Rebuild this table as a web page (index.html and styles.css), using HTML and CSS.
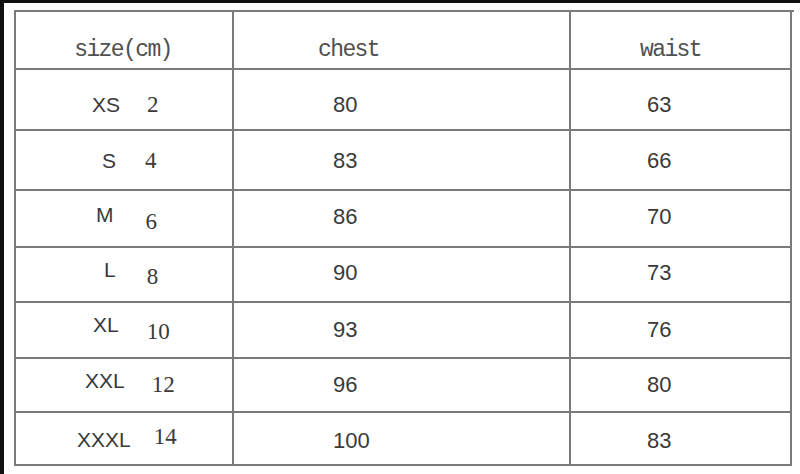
FILE: index.html
```html
<!DOCTYPE html>
<html lang="en">
<head>
<meta charset="utf-8">
<title>Size chart</title>
<link rel="stylesheet" href="styles.css">
</head>
<body>
<div class="frame">
  <div class="chart">
    <div class="cell head h-size">size(cm)</div>
    <div class="cell head h-chest">chest</div>
    <div class="cell head h-waist">waist</div>

    <div class="cell sz r1"><span class="lbl">XS</span><span class="num">2</span></div>
    <div class="cell val c r1">80</div>
    <div class="cell val w r1">63</div>

    <div class="cell sz r2"><span class="lbl">S</span><span class="num">4</span></div>
    <div class="cell val c r2">83</div>
    <div class="cell val w r2">66</div>

    <div class="cell sz r3"><span class="lbl">M</span><span class="num">6</span></div>
    <div class="cell val c r3">86</div>
    <div class="cell val w r3">70</div>

    <div class="cell sz r4"><span class="lbl">L</span><span class="num">8</span></div>
    <div class="cell val c r4">90</div>
    <div class="cell val w r4">73</div>

    <div class="cell sz r5"><span class="lbl">XL</span><span class="num">10</span></div>
    <div class="cell val c r5">93</div>
    <div class="cell val w r5">76</div>

    <div class="cell sz r6"><span class="lbl">XXL</span><span class="num">12</span></div>
    <div class="cell val c r6">96</div>
    <div class="cell val w r6">80</div>

    <div class="cell sz r7"><span class="lbl">XXXL</span><span class="num">14</span></div>
    <div class="cell val c r7">100</div>
    <div class="cell val w r7">83</div>
  </div>
</div>
</body>
</html>
```
FILE: styles.css
```css
html, body {
  margin: 0;
  padding: 0;
  background: #ffffff;
}

.frame {
  box-sizing: border-box;
  width: 800px;
  height: 474px;
  border-top: 3px solid #111111;
  border-left: 4px solid #111111;
  padding: 7px 0 0 10px;
  background: #ffffff;
}

.chart {
  display: grid;
  grid-template-columns: 218px 337px 221px;
  grid-template-rows: 58px 61px 60px 57px 55px 56px 54px 53px;
  width: 778px;
  border-top: 2px solid #7a7a7a;
  border-left: 2px solid #7a7a7a;
}

.cell {
  box-sizing: border-box;
  border-right: 2px solid #7a7a7a;
  border-bottom: 2px solid #7a7a7a;
  display: flex;
  align-items: center;
  color: #333333;
}

.head {
  font-family: "Liberation Mono", monospace;
  font-size: 23px;
  letter-spacing: -1.6px;
  color: #505050;
  padding-top: 19px;
}

.h-size { justify-content: center; padding-right: 2px; }
.h-chest { padding-left: 84px; }
.h-waist { padding-left: 69px; }

.sz .lbl {
  font-family: "Liberation Sans", Arial, sans-serif;
  font-size: 21px;
  color: #3a3a3a;
}

.sz .num {
  font-family: "Liberation Serif", "Times New Roman", serif;
  font-size: 23px;
  color: #3a3a3a;
}

.val {
  font-family: "Liberation Sans", Arial, sans-serif;
  font-size: 22px;
  color: #3a3a3a;
}

.val.c { padding-left: 99px; }
.val.w { padding-left: 76px; }

/* row vertical tuning */
.r1 { padding-top: 11px; }
.r2 { padding-top: 2px; }
.r3 { padding-bottom: 3px; }
.r4 { padding-bottom: 3px; }
.r7 { padding-top: 5px; }

/* size column: label/number placement per row */
.sz.r1 { padding-left: 76px; }
.sz.r1 .num { margin-left: 27px; }

.sz.r2 { padding-left: 86px; }
.sz.r2 .num { margin-left: 29px; }

.sz.r3 { padding-left: 80px; padding-bottom: 0; }
.sz.r3 .lbl { margin-bottom: 7px; }
.sz.r3 .num { margin-left: 32px; margin-top: 7px; }

.sz.r4 { padding-left: 88px; padding-bottom: 0; }
.sz.r4 .lbl { margin-bottom: 9px; }
.sz.r4 .num { margin-left: 31px; margin-top: 5px; }

.sz.r5 { padding-left: 77px; }
.sz.r5 .lbl { margin-bottom: 10px; }
.sz.r5 .num { margin-left: 28px; margin-top: 4px; }

.sz.r6 { padding-left: 69px; }
.sz.r6 .lbl { margin-bottom: 8px; }
.sz.r6 .num { margin-left: 27px; }

.sz.r7 { padding-left: 61px; padding-top: 0; }
.sz.r7 .lbl { margin-top: 3px; }
.sz.r7 .num { margin-left: 23px; margin-bottom: 3px; }
```
